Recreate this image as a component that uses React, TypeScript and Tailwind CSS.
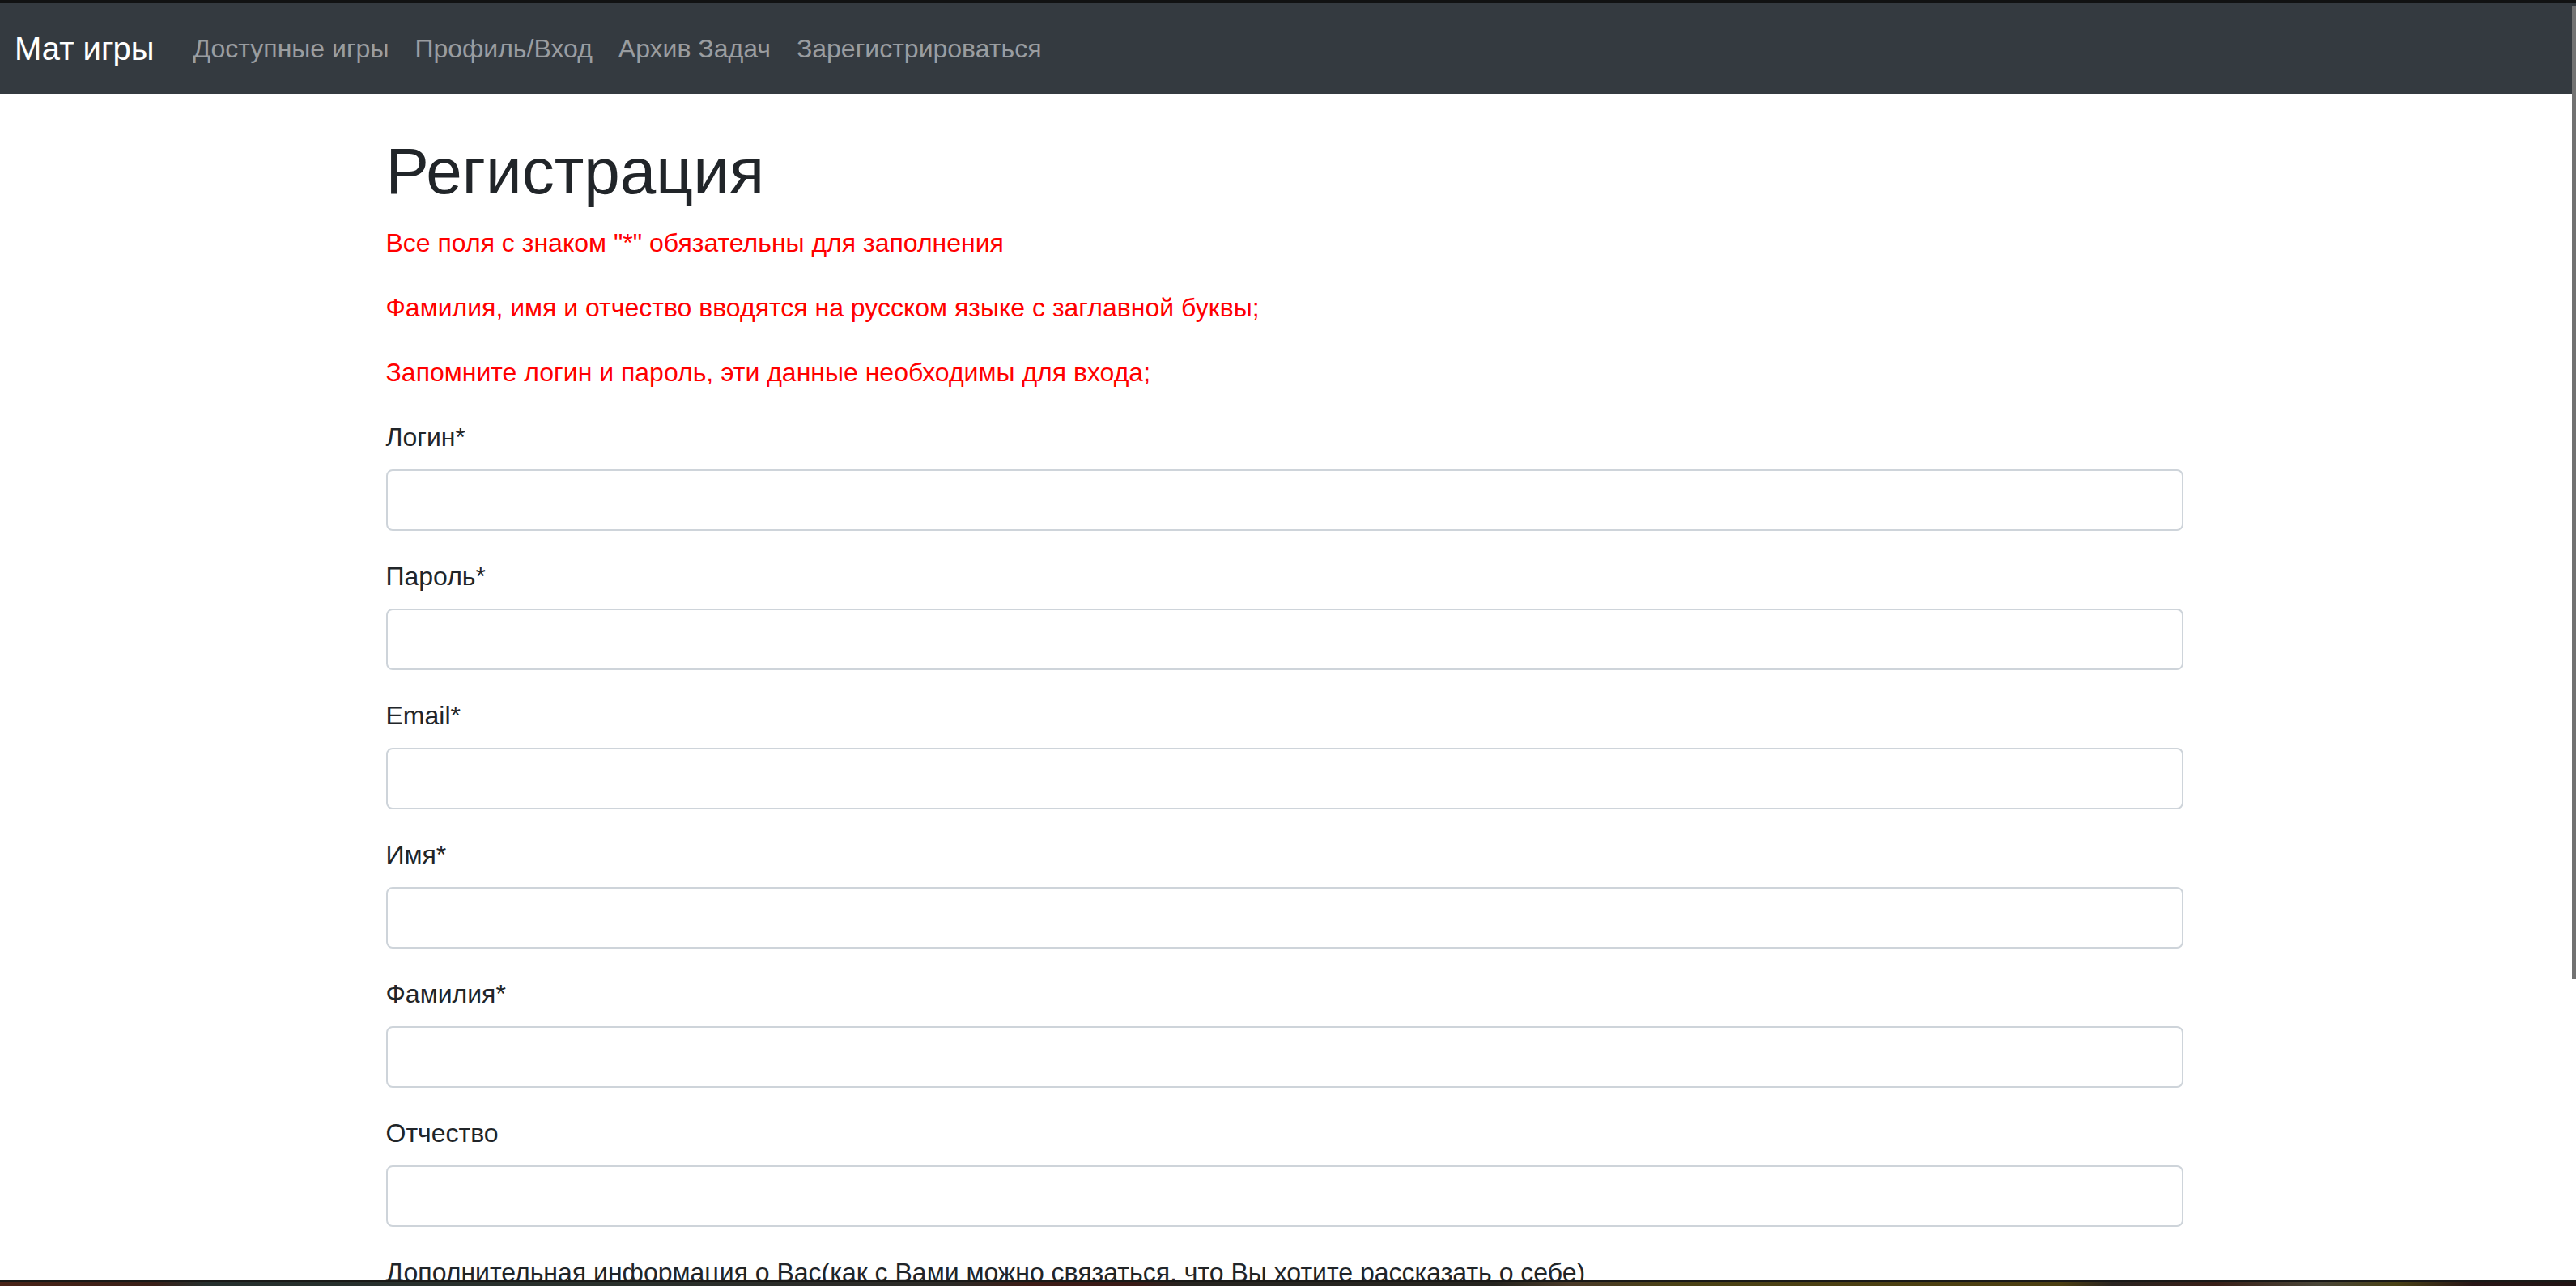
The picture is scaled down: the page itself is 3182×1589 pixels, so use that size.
import React from "react";

const navLinks = ["Доступные игры", "Профиль/Вход", "Архив Задач", "Зарегистрироваться"];

const notes = [
  'Все поля с знаком "*" обязательны для заполнения',
  "Фамилия, имя и отчество вводятся на русском языке с заглавной буквы;",
  "Запомните логин и пароль, эти данные необходимы для входа;",
];

const fields = [
  { name: "login", label: "Логин*", type: "text" },
  { name: "password", label: "Пароль*", type: "password" },
  { name: "email", label: "Email*", type: "email" },
  { name: "name", label: "Имя*", type: "text" },
  { name: "surname", label: "Фамилия*", type: "text" },
  { name: "patronymic", label: "Отчество", type: "text" },
];

function Navbar() {
  return (
    <nav className="flex h-[112px] items-center bg-[#343a40] pl-[18px]">
      <a className="mr-[32px] text-[40px] leading-[60px] text-white" href="#">
        Мат игры
      </a>
      <ul className="flex">
        {navLinks.map((link) => (
          <li key={link}>
            <a className="block px-[16px] text-[32px] leading-[48px] text-[#9a9da0]" href="#">
              {link}
            </a>
          </li>
        ))}
      </ul>
    </nav>
  );
}

function RegisterForm() {
  return (
    <div className="mx-auto w-[2224px] pr-[4px] pt-[48px]">
      <h1 className="mb-[16px] text-[80px] leading-[96px] text-[#212529]">Регистрация</h1>
      {notes.map((note) => (
        <p key={note} className="mb-[32px] text-[32px] leading-[48px] text-[#ff0000]">
          {note}
        </p>
      ))}
      <form>
        {fields.map((field) => (
          <div key={field.name} className="mb-[32px]">
            <label className="mb-[16px] block text-[32px] leading-[48px] text-[#212529]">
              {field.label}
            </label>
            <input
              type={field.type}
              name={field.name}
              className="block h-[76px] w-full rounded-[8px] border-2 border-[#ced4da] bg-white px-[24px] text-[32px] text-[#495057] outline-none"
            />
          </div>
        ))}
        <div className="mb-[32px]">
          <label className="mb-[16px] block text-[32px] leading-[48px] text-[#212529]">
            Дополнительная информация о Вас(как с Вами можно связаться, что Вы хотите рассказать о себе)
          </label>
        </div>
      </form>
    </div>
  );
}

export default function App() {
  return (
    <div className="flex h-[1589px] flex-col overflow-hidden bg-white font-['Liberation_Sans',Arial,sans-serif]">
      <div className="h-[4px] bg-[#111213]"></div>
      <div className="flex h-[1578px] overflow-hidden">
        <div className="flex-1 overflow-hidden">
          <Navbar />
          <RegisterForm />
        </div>
        {/* scrollbar */}
        <div className="flex w-[5px] flex-col">
          <div className="h-[4px] bg-[#343a40]"></div>
          <div className="h-[1202px] bg-[#727272]"></div>
        </div>
      </div>
      <div className="h-[7px] border-t-2 border-[#191917] bg-[linear-gradient(to_right,#4a2418_0%,#3a2018_6%,#26302e_8%,#2a302c_25%,#2b2b28_33%,#2c2a26_37%,#3e1c16_40%,#3a1a16_44%,#262420_46%,#25241f_58%,#4a3a28_61%,#4b4216_65%,#4d4012_76%,#4c3f12_80%,#2a2420_82%,#3a2018_86%,#4a4638_90%,#4a4216_93%,#281616_96%,#221414_100%)]"></div>
    </div>
  );
}
